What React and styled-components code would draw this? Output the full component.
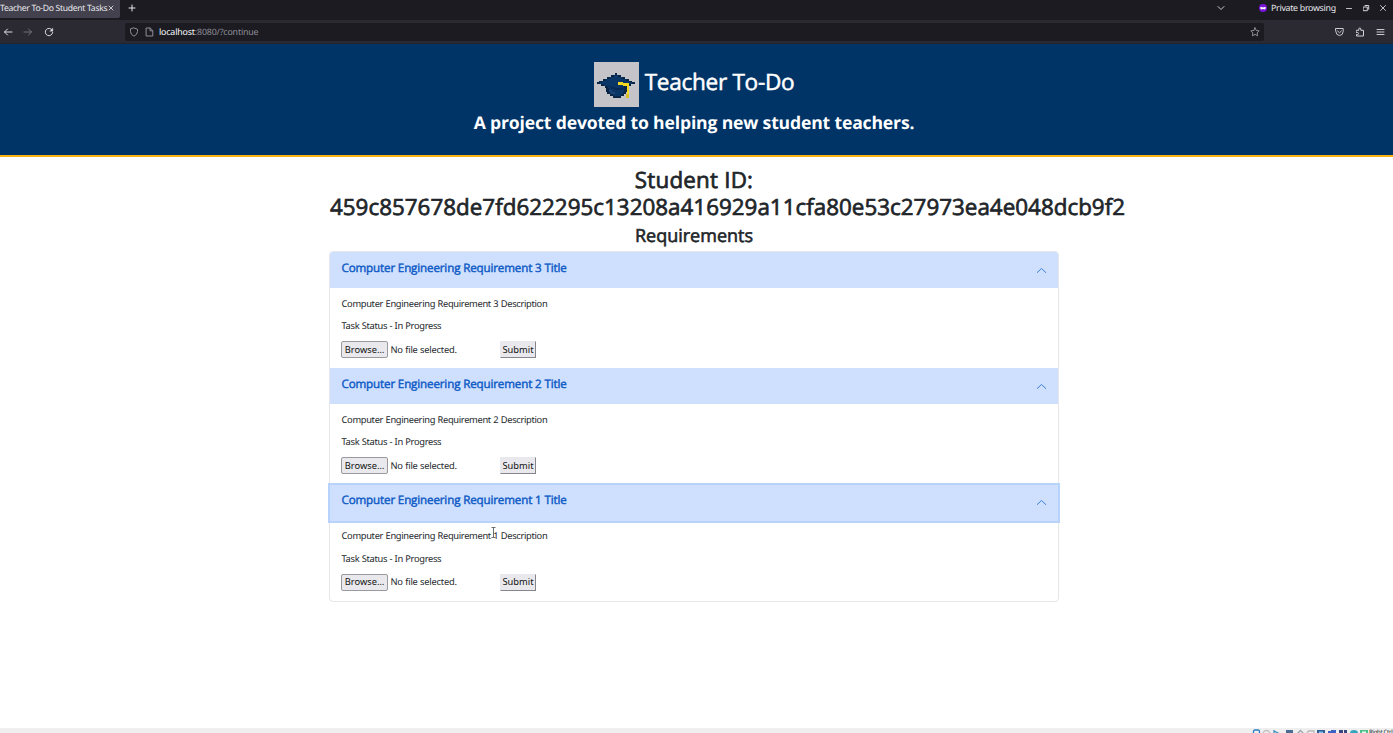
import React from "react";
import styled, { createGlobalStyle, css } from "styled-components";

const GlobalStyle = createGlobalStyle`
  *, *::before, *::after { box-sizing: border-box; }
  html, body, #root { height: 100%; }
  body {
    margin: 0;
    background: #fff;
    color: #212529;
    font-family: "Noto Sans", sans-serif;
    text-rendering: geometricPrecision;
    overflow: hidden;
  }
  h1, h2, h3, h4, p { margin: 0; }
  button { font-family: inherit; }
`;

const Window = styled.div`
  height: 733px;
  display: flex;
  flex-direction: column;
`;

const TabBar = styled.div`
  height: 20px;
  flex: none;
  display: flex;
  align-items: center;
  padding: 0 6px 4px 0;
  background: #1c1b22;
  color: #e9e9ee;
  font-size: 8.8px;
  white-space: nowrap;
  line-height: 12px;
`;

const Tab = styled.div`
  width: 120px;
  height: 18px;
  align-self: flex-start;
  display: flex;
  align-items: center;
  padding-bottom: 2px;
  background: #42414d;
  border-radius: 0 0 2px 0;
`;

const TabTitle = styled.span`
  width: 108px;
  font-size: 8.6px;
  letter-spacing: -0.3px;
`;

const Glyph = styled.svg`
  flex: none;
  display: block;
  fill: none;
  stroke: currentColor;
  stroke-width: ${(p) => p.$weight || 1};
  stroke-linecap: round;
  stroke-linejoin: round;
  margin-left: ${(p) => p.$left || 0}px;
  opacity: ${(p) => p.$fade || 1};
`;

const Spacer = styled.div`
  flex: 1;
`;

const PrivateLabel = styled.span`
  width: 64px;
  margin-left: 4px;
  letter-spacing: -0.28px;
`;

const NavBar = styled.div`
  height: 24px;
  flex: none;
  display: flex;
  align-items: center;
  background: #2b2a33;
  color: #dcdce2;
  border-bottom: 1px solid #20242f;
  padding: 0 8px 0 3px;
`;

const UrlBox = styled.div`
  width: 1139px;
  height: 18px;
  margin-left: 71px;
  display: flex;
  align-items: center;
  background: #1c1b22;
  border-radius: 2px;
  font-size: 8.8px;
  color: #8f8f98;
  padding: 0 4px;
`;

const Url = styled.span`
  margin-left: 5px;
  letter-spacing: -0.15px;
  b { font-weight: 400; color: #fbfbfe; }
`;

const Banner = styled.header`
  height: 113px;
  flex: none;
  background: #003366;
  border-bottom: 2px solid #fbb40f;
  color: #fff;
  text-align: center;
  padding: 17.5px 5px 0 0;
`;

const Brand = styled.h1`
  display: flex;
  justify-content: center;
  height: 45px;
  font: 400 22.6px/39px "Open Sans", sans-serif;
  letter-spacing: -0.3px;
  -webkit-text-stroke: 0.5px currentColor;
  gap: 6px;
`;

const Logo = styled.svg`
  width: 45px;
  height: 45px;
  background: #c5c5c9;
  stroke: none;
`;

const Tagline = styled.p`
  font: 700 17.6px/24px "Open Sans", sans-serif;
  letter-spacing: -0.17px;
  margin-top: 4px;
`;

const Main = styled.main`
  flex: 1;
  width: 730px;
  margin-left: 329px;
  padding-top: 9px;
`;

const StudentHeading = styled.h2`
  font: 400 22.4px/27px "Open Sans", sans-serif;
  letter-spacing: 0.2px;
  -webkit-text-stroke: 0.7px currentColor;
  text-align: center;
`;

const StudentHash = styled.div`
  font: 400 22.4px/27px "Open Sans", sans-serif;
  letter-spacing: 0.01px;
  -webkit-text-stroke: 0.7px currentColor;
  white-space: nowrap;
  padding-left: 1px;
`;

const SubHeading = styled.h3`
  font: 400 18px/22px "Open Sans", sans-serif;
  -webkit-text-stroke: 0.6px currentColor;
  text-align: center;
  margin: 5px 0 4px;
`;

const Accordion = styled.div`
  border: 1px solid #e4e6e9;
  border-radius: 4px;
  height: 351px;
  display: flex;
  flex-direction: column;
`;

const Item = styled.section`
  flex: 1;
`;

const ItemHeader = styled.div`
  display: flex;
  align-items: center;
  justify-content: space-between;
  height: 36px;
  padding: 0 11px 0 11.5px;
  background: #cfe0fe;
  color: #0f5bc6;
  border-radius: ${(p) => (p.$first ? "3px 3px 0 0" : "0")};
  ${(p) =>
    p.$focused &&
    css`
      box-shadow: 0 0 0 2px #b8d3fb;
    `}
`;

const ItemTitle = styled.h4`
  font: 400 11.6px/16px "Open Sans", sans-serif;
  letter-spacing: -0.14px;
  -webkit-text-stroke: 0.45px currentColor;
  padding-bottom: 3px;
`;

const ItemBody = styled.div`
  padding: 7.5px 11px 0 11px;
  font-size: 9.3px;
  letter-spacing: -0.31px;
  word-spacing: 0.3px;
`;

const Line = styled.p`
  position: relative;
  line-height: 16px;
  margin-bottom: 6.5px;
  padding-left: 0.5px;
`;

const TextCursor = styled.svg`
  position: absolute;
  left: 150px;
  top: -1px;
  width: 5px;
  height: 11px;
  fill: none;
  stroke: #6b6e72;
  stroke-width: 1;
`;

const Form = styled.div`
  display: flex;
  align-items: center;
  height: 18px;
`;

const Browse = styled.button`
  width: 47px;
  height: 17px;
  padding: 0;
  border: 1px solid #9a9a9e;
  border-radius: 2px;
  background: #e9e9ed;
  color: #111;
  font-size: 9.3px;
  line-height: 14px;
`;

const FileName = styled.span`
  width: 109px;
  margin-left: 2.5px;
  margin-right: 0.5px;
  padding-bottom: 1px;
  letter-spacing: -0.22px;
`;

const Submit = styled.button`
  width: 36px;
  height: 17px;
  padding: 0;
  border: 1px solid;
  border-color: #e9e9ed #85858b #85858b #e9e9ed;
  background: #e9e9ed;
  color: #111;
  font-size: 9.3px;
  line-height: 14px;
`;

const StatusStrip = styled.footer`
  height: 5px;
  flex: none;
  display: flex;
  justify-content: flex-end;
  background: #efefef;
  overflow: hidden;
`;

const HostKey = styled.span`
  width: 24px;
  font-size: 6px;
  line-height: 8px;
  letter-spacing: -0.3px;
  white-space: nowrap;
`;

const StatusIcons = styled.svg`
  width: 117px;
  height: 5px;
  flex: none;
`;

const items = [3, 2, 1];

const capRows = [
  [21, 11, 2],
  [17, 13, 10],
  [13, 15, 18],
  [9, 17, 26],
  [5, 19, 33],
  [3, 20, 38],
  [7, 22, 30],
  [11, 24, 22],
  [12, 26, 21],
  [12, 28, 21],
  [13, 30, 19],
  [16, 32, 14],
  [19, 34, 8],
];

function CapLogo() {
  return (
    <Logo viewBox="0 0 45 45" shapeRendering="crispEdges">
      {capRows.map(([x, y, w]) => (
        <rect key={y} x={x} y={y} width={w} height="2" fill="#0a2647" />
      ))}
      {capRows.slice(1, -1).map(([x, y, w]) => (
        <rect key={y} x={x + 3} y={y} width={w - 6} height="2" fill="#0a3567" />
      ))}
      <path d="M13 25h4v2h4v1h8v-1h3v-1h-3v-1h-2v1h-6v-1h-4v-1h-4z" fill="#082a52" />
      <path d="M15 28h3v2h3v2h-4v-2h-2z" fill="#1c4373" />
      <path d="M24 20h5v1h6v3h-6v-1h-5z" fill="#f5d81f" />
      <path d="M33 24h2v12h-2z" fill="#f5d81f" />
      <path d="M32 32h3v4h-3z" fill="#d9bd2c" />
    </Logo>
  );
}

export default function App() {
  return (
    <Window>
      <GlobalStyle />
      <TabBar>
        <Tab>
          <TabTitle>Teacher To-Do Student Tasks</TabTitle>
          <Glyph width="6" height="6" viewBox="0 0 6 6" $weight={0.8}>
            <path d="M1 1l4 4M5 1L1 5" />
          </Glyph>
        </Tab>
        <Glyph width="8" height="8" viewBox="0 0 8 8" $left={8}>
          <path d="M4 1v6M1 4h6" />
        </Glyph>
        <Spacer />
        <Glyph width="8" height="8" viewBox="0 0 8 8" $fade={0.85}>
          <path d="M1 2.500l3 3 3-3" />
        </Glyph>
        <Glyph width="8" height="8" viewBox="0 0 8 8" $left={34}>
          <circle cx="4" cy="4" r="4" fill="#7a14d8" stroke="none" />
          <path d="M1.200 3.300q1.400-.8 2.800.2 1.400-1 2.800-.2.2 2-1.300 2.200Q4.600 5.500 4 4.700q-.6.8-1.500.8Q1 5.300 1.200 3.300z" fill="#fff" stroke="none" />
        </Glyph>
        <PrivateLabel>Private browsing</PrivateLabel>
        <Glyph width="8" height="8" viewBox="0 0 8 8" $left={10} $fade={0.8}>
          <path d="M1.500 4.500h5" />
        </Glyph>
        <Glyph width="8" height="8" viewBox="0 0 8 8" $left={9} $fade={0.9}>
          <path d="M1.500 3h3.800v3.700H1.500zM3 1.500h3.700v3.800" />
        </Glyph>
        <Glyph width="8" height="8" viewBox="0 0 8 8" $left={9} $fade={0.8}>
          <path d="M1.500 1.500l5 5M6.500 1.500l-5 5" />
        </Glyph>
      </TabBar>
      <NavBar>
        <Glyph width="10" height="10" viewBox="0 0 10 10">
          <path d="M9 5H1.500M4.500 2l-3 3 3 3" />
        </Glyph>
        <Glyph width="10" height="10" viewBox="0 0 10 10" $left={10} $fade={0.4}>
          <path d="M1 5h7.500M5.500 2l3 3-3 3" />
        </Glyph>
        <Glyph width="10" height="10" viewBox="0 0 10 10" $left={11}>
          <path d="M8.300 3.300A3.700 3.700 0 1 0 8.700 5.500" />
          <path d="M8.800 1.300v2.900H6z" fill="currentColor" strokeWidth=".4" />
        </Glyph>
        <UrlBox>
          <Glyph width="10" height="10" viewBox="0 0 10 10">
            <path d="M5 1L8.500 2.200v2.300Q8.300 7.800 5 9.200 1.700 7.800 1.500 4.500V2.200z" />
          </Glyph>
          <Glyph width="9" height="10" viewBox="0 0 9 10" $left={6}>
            <path d="M1.500 1h3.700l2.600 2.600V9H1.500zM5 1.200v2.600h2.600" />
          </Glyph>
          <Url><b>localhost</b>:8080/?continue</Url>
          <Spacer />
          <Glyph width="10" height="10" viewBox="0 0 10 10">
            <path d="M5 .8l1.300 2.700 2.900.4-2.100 2 .5 2.900L5 7.400 2.400 8.800l.5-2.900-2.100-2 2.900-.4z" />
          </Glyph>
        </UrlBox>
        <Spacer />
        <Glyph width="9" height="10" viewBox="0 0 9 10" $fade={0.9}>
          <path d="M.8 1.500h7.400v3Q8 8.200 4.500 8.600 1 8.200.8 4.500zM2.600 4l1.900 1.800L6.400 4" />
        </Glyph>
        <Glyph width="10" height="10" viewBox="0 0 10 10" $left={11} $fade={0.95}>
          <path d="M1.500 3.300h2.300V2q0-1 1-1t1 1v1.300h2.700V9h-7V7.500h1q1 0 1-1t-1-1h-1z" />
        </Glyph>
        <Glyph width="9" height="10" viewBox="0 0 9 10" $left={11} $fade={0.9}>
          <path d="M1 2.500h7M1 5h7M1 7.500h7" />
        </Glyph>
      </NavBar>
      <Banner>
        <Brand>
          <CapLogo />
          Teacher To-Do
        </Brand>
        <Tagline>A project devoted to helping new student teachers.</Tagline>
      </Banner>
      <Main>
        <StudentHeading>Student ID:</StudentHeading>
        <StudentHash>459c857678de7fd622295c13208a416929a11cfa80e53c27973ea4e048dcb9f2</StudentHash>
        <SubHeading>Requirements</SubHeading>
        <Accordion>
          {items.map((n) => (
            <Item key={n}>
              <ItemHeader $first={n === 3} $focused={n === 1}>
                <ItemTitle>Computer Engineering Requirement {n} Title</ItemTitle>
                <Glyph width="11" height="7" viewBox="0 0 11 7" $fade={0.75}>
                  <path d="M1.200 5.500l4.300-4 4.300 4" />
                </Glyph>
              </ItemHeader>
              <ItemBody>
                <Line>
                  Computer Engineering Requirement {n} Description
                  {n === 1 && (
                    <TextCursor viewBox="0 0 5 11">
                      <path d="M.5.500h4M2.500.500v10M.5 10.500h4" />
                    </TextCursor>
                  )}
                </Line>
                <Line>Task Status - In Progress</Line>
                <Form>
                  <Browse>Browse…</Browse>
                  <FileName>No file selected.</FileName>
                  <Submit>Submit</Submit>
                </Form>
              </ItemBody>
            </Item>
          ))}
        </Accordion>
      </Main>
      <StatusStrip>
        <StatusIcons viewBox="0 0 117 5">
          <g fill="none" strokeWidth="1.300">
            <rect x="1.500" y="2" width="6" height="6" rx="1.500" stroke="#2f7fc4" />
            <circle cx="14.500" cy="6" r="3.500" stroke="#c4c4c4" />
            <path d="M22 2v4M22 3l6 3" stroke="#3f8fc0" />
            <path d="M45 6l3.500-3.500L52 6" stroke="#9aa4ac" />
            <path d="M55 5l1.500-2H62v3" stroke="#b9b9b9" />
          </g>
          <path d="M34 2h7v3h-7z" fill="#4a6c90" />
          <path d="M65 2h8v3h-8z" fill="#2f5c94" />
          <path d="M67 3.500h4V5h-4z" fill="#7fc0ee" />
          <path d="M76 3h3V2h5v3h-8z" fill="#3d62c4" />
          <path d="M87 2h4v3h-4zM92 2h3v3h-3z" fill="#38487c" />
          <path d="M98 5q0-3 4-3t4 3z" fill="#38a5bd" />
          <path d="M108 2h8v3h-8z" fill="#4cbf8a" />
          <path d="M110 3.500h4V5h-4z" fill="#e6fff2" />
        </StatusIcons>
        <HostKey>Right Ctrl</HostKey>
      </StatusStrip>
    </Window>
  );
}
